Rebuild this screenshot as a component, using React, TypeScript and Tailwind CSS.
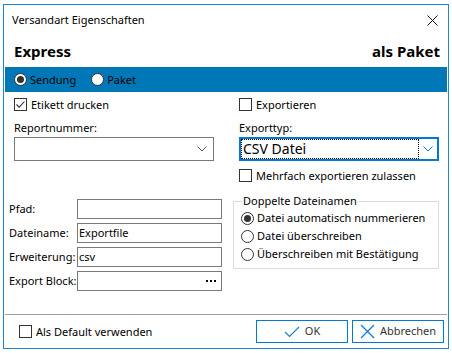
import React from 'react';

const font = { fontFamily: '"Noto Sans", "Liberation Sans", sans-serif' };

function Check({ checked, label }: { checked?: boolean; label: string }) {
  return (
    <div className="flex items-center h-[13px]">
      <span className="w-[13px] h-[13px] border border-[#333333] bg-white flex items-center justify-center shrink-0">
        {checked && (
          <svg width="11" height="11" viewBox="0 0 11 11">
            <path d="M1.5 5.5 L4.2 8.2 L9.5 2.5" fill="none" stroke="#333" strokeWidth="1.1" />
          </svg>
        )}
      </span>
      <span className="ml-[4px] text-[11px] leading-[16px] text-black whitespace-nowrap">{label}</span>
    </div>
  );
}

function Radio({ checked, label }: { checked?: boolean; label: string }) {
  return (
    <div className="flex items-center h-[18px]">
      <span className="w-[13px] h-[13px] rounded-full border border-[#333333] bg-white flex items-center justify-center shrink-0">
        {checked && <span className="w-[7px] h-[7px] rounded-full bg-[#333333]" />}
      </span>
      <span className="ml-[3px] text-[11px] leading-[16px] text-black whitespace-nowrap">{label}</span>
    </div>
  );
}

function Chevron({ color }: { color: string }) {
  return (
    <svg width="10" height="6" viewBox="0 0 10 6">
      <path d="M0.5 0.5 L5 5 L9.5 0.5" fill="none" stroke={color} strokeWidth="1" />
    </svg>
  );
}

function Field({ label, value, dots }: { label: string; value?: string; dots?: boolean }) {
  return (
    <div className="flex items-center h-[20px]">
      <span className="w-[68px] text-[11px] leading-[16px] text-black whitespace-nowrap">{label}</span>
      <div className="w-[145px] h-[20px] border border-[#7a7a7a] bg-white flex items-center pl-[1px] pr-[5px]">
        <span className="flex-1 text-[11px] leading-[16px] text-black">{value}</span>
        {dots && (
          <span className="flex gap-[2px] items-center">
            <span className="w-[2px] h-[2px] bg-black" />
            <span className="w-[2px] h-[2px] bg-black" />
            <span className="w-[2px] h-[2px] bg-black" />
          </span>
        )}
      </div>
    </div>
  );
}

export default function App() {
  return (
    <div className="w-[452px] h-[353px] bg-white pt-[4px] pl-[3px]" style={font}>
      <div className="w-[446px] h-[345px] border border-[#1e84d6] flex flex-col bg-white">
        {/* Title bar */}
        <div className="h-[31px] flex items-center justify-between pl-[8px] pr-[10px] shrink-0">
          <span className="text-[11px] text-black">Versandart Eigenschaften</span>
          <svg width="11" height="11" viewBox="0 0 11 11">
            <path d="M0.5 0.5 L10.5 10.5 M10.5 0.5 L0.5 10.5" stroke="#111" strokeWidth="1" />
          </svg>
        </div>

        {/* Header */}
        <div className="h-[31px] flex items-center justify-between pl-[10px] pr-[8px] shrink-0">
          <span className="text-[15px] font-bold text-black">Express</span>
          <span className="text-[15px] font-bold text-black">als Paket</span>
        </div>

        {/* Blue bar */}
        <div className="h-[25px] mx-px bg-[#0077b6] flex items-center pl-[9px] gap-[15px] shrink-0">
          <Radio checked label="Sendung" />
          <Radio label="Paket" />
        </div>

        {/* Body */}
        <div className="flex-1 flex">
          <div className="w-[229px] pl-[5px]">
            <div className="pl-[5px] w-[205px]">
              <div className="mt-[6px]">
                <Check checked label="Etikett drucken" />
              </div>
              <div className="mt-[9px] text-[11px] leading-[16px] text-black">Reportnummer:</div>
              <div className="mt-px h-[24px] border border-[#7a7a7a] bg-white flex items-center justify-end pr-[6px]">
                <Chevron color="#555" />
              </div>
            </div>
            <div className="mt-[38px] flex flex-col gap-[4px]">
              <Field label="Pfad:" />
              <Field label="Dateiname:" value="Exportfile" />
              <Field label="Erweiterung:" value="csv" />
              <Field label="Export Block:" dots />
            </div>
          </div>

          <div className="w-[206px]">
            <div className="pl-[6px]">
              <div className="mt-[6px]">
                <Check label="Exportieren" />
              </div>
              <div className="mt-[9px] text-[11px] leading-[16px] text-black">Exporttyp:</div>
              <div className="mt-px h-[24px] border-2 border-[#0078d7] bg-white flex items-center">
                <div className="flex-1 h-full border border-dotted border-black flex items-center pl-px">
                  <span className="text-[14px] leading-[18px] text-black">CSV Datei</span>
                </div>
                <div className="w-[18px] flex items-center justify-center">
                  <Chevron color="#0078d7" />
                </div>
              </div>
              <div className="mt-[8px]">
                <Check label="Mehrfach exportieren zulassen" />
              </div>
            </div>
            <fieldset className="mt-[11px] border border-[#dcdcdc] pl-[7px] pb-[5px]">
              <legend className="ml-[1px] text-[11px] leading-[16px] text-black px-px">Doppelte Dateinamen</legend>
              <Radio checked label="Datei automatisch nummerieren" />
              <Radio label="Datei überschreiben" />
              <Radio label="Überschreiben mit Bestätigung" />
            </fieldset>
          </div>
        </div>

        {/* Separator */}
        <div className="h-px bg-[#a0a0a0] mx-px shrink-0" />

        {/* Footer */}
        <div className="h-[33px] flex items-center pl-[15px] pr-[4px] shrink-0">
          <Check label="Als Default verwenden" />
          <div className="flex-1" />
          <button className="w-[92px] h-[23px] border border-[#0078d7] bg-white flex items-center justify-center gap-[5px]">
            <svg width="16" height="12" viewBox="0 0 16 12">
              <path d="M1 6 L5.5 10.5 L15 1" fill="none" stroke="#1a7fd0" strokeWidth="1.2" />
            </svg>
            <span className="text-[11px] text-[#333]">OK</span>
          </button>
          <button className="ml-[4px] w-[92px] h-[23px] border border-[#0078d7] bg-white flex items-center justify-center gap-[5px]">
            <svg width="15" height="15" viewBox="0 0 15 15">
              <path d="M1 1 L14 14 M14 1 L1 14" stroke="#1a7fd0" strokeWidth="1.4" />
            </svg>
            <span className="text-[11px] text-[#333]">Abbrechen</span>
          </button>
        </div>
      </div>
    </div>
  );
}
